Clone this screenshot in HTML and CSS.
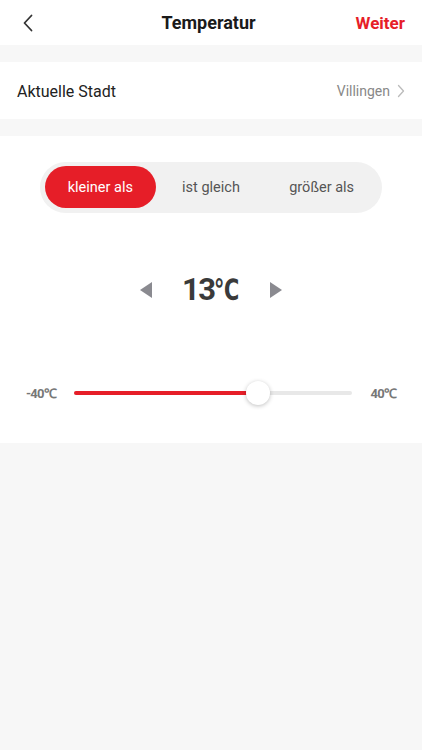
FILE: index.html
```html
<!DOCTYPE html>
<html lang="de">

<head>
    <meta charset="UTF-8">
    <meta name="viewport" content="width=device-width, initial-scale=1.0">
    <title>Temperatur</title>
    <link rel="stylesheet" href="styles.css">
</head>

<body>
    <header class="topbar">
        <button class="back" aria-label="Zurück">
            <svg width="12" height="18" viewBox="0 0 12 18">
                <path d="M9.5 1.5 L2.5 9 L9.5 16.5" fill="none" stroke="#333" stroke-width="1.8" stroke-linecap="round" stroke-linejoin="round"/>
            </svg>
        </button>
        <h1 class="title">Temperatur</h1>
        <a class="next" href="#">Weiter</a>
    </header>

    <section class="row">
        <span class="row-label">Aktuelle Stadt</span>
        <span class="row-value">
            Villingen
            <svg width="8" height="14" viewBox="0 0 8 14">
                <path d="M1.5 1.5 L6.5 7 L1.5 12.5" fill="none" stroke="#bbb" stroke-width="1.3" stroke-linecap="round" stroke-linejoin="round"/>
            </svg>
        </span>
    </section>

    <section class="panel">
        <div class="segments">
            <button class="segment active">kleiner als</button>
            <button class="segment">ist gleich</button>
            <button class="segment">größer als</button>
        </div>

        <div class="stepper">
            <span class="arrow left"></span>
            <span class="value">13<span class="unit">℃</span></span>
            <span class="arrow right"></span>
        </div>

        <div class="slider">
            <span class="limit">-40℃</span>
            <div class="track">
                <div class="fill" style="width: 66%"></div>
                <div class="thumb" style="left: 66%"></div>
            </div>
            <span class="limit">40℃</span>
        </div>
    </section>
</body>

</html>
```

FILE: styles.css
```css
:root {
    --bg: #f7f7f7;
    --red: #e61e28;
    --text: #222;
    --muted: #888;
}

body {
    margin: 0;
    height: 100vh;
    background: var(--bg);
    font-family: Roboto, "Liberation Sans", Arial, sans-serif;
    color: var(--text);
}

.topbar {
    height: 45px;
    background: #fff;
    display: grid;
    grid-template-columns: 80px 1fr 80px;
    align-items: center;
    padding: 0 17px 0 18px;
}

.back {
    background: none;
    border: none;
    padding: 0;
    width: 20px;
    display: flex;
    align-items: center;
    justify-content: center;
    margin-top: 1px;
}

.title {
    margin: 0 0 0 -6px;
    text-align: center;
    font-size: 18px;
    font-weight: bold;
    color: #1a1a1a;
}

.next {
    justify-self: end;
    color: var(--red);
    font-size: 17px;
    font-weight: bold;
    text-decoration: none;
}

.row {
    margin-top: 17px;
    height: 57px;
    background: #fff;
    display: flex;
    align-items: center;
    justify-content: space-between;
    padding: 0 17px;
}

.row-label {
    font-size: 16px;
    margin-top: 1px;
}

.row-value {
    display: flex;
    align-items: center;
    gap: 7px;
    font-size: 14px;
    color: var(--muted);
}

.panel {
    margin-top: 17px;
    height: 307px;
    background: #fff;
    padding-top: 26px;
    box-sizing: border-box;
}

.segments {
    width: 342px;
    height: 51px;
    margin: 0 auto;
    box-sizing: border-box;
    padding: 4px 5px 5px;
    background: #f1f1f1;
    border-radius: 26px;
    display: grid;
    grid-template-columns: repeat(3, 1fr);
}

.segment {
    border: none;
    background: none;
    border-radius: 21px;
    font-family: inherit;
    font-size: 14.5px;
    color: #555;
    padding: 0;
}

.segment.active {
    background: var(--red);
    color: #fff;
}

.stepper {
    margin-top: 58px;
    display: flex;
    align-items: center;
    justify-content: center;
    gap: 30px;
}

.value {
    font-size: 31px;
    font-weight: bold;
    color: #3a3a3a;
    letter-spacing: -1.5px;
}

.unit {
    display: inline-block;
    font-family: "DejaVu Sans Condensed", "DejaVu Sans", sans-serif;
    font-size: 29px;
    letter-spacing: 0;
    transform: scaleX(0.8);
    transform-origin: left center;
    margin-right: -6px;
}

.arrow {
    width: 0;
    height: 0;
    border-top: 8px solid transparent;
    border-bottom: 8px solid transparent;
}

.arrow.left {
    border-right: 12px solid #8a8a90;
}

.arrow.right {
    border-left: 12px solid #8a8a90;
}

.slider {
    margin-top: 76px;
    display: flex;
    align-items: center;
    padding: 0 26px;
    gap: 18px;
}

.limit {
    font-size: 13px;
    font-weight: bold;
    color: #777;
    letter-spacing: -0.8px;
}

.track {
    flex: 1;
    height: 4px;
    border-radius: 2px;
    background: #e8e8e8;
    position: relative;
}

.fill {
    height: 100%;
    border-radius: 2px;
    background: var(--red);
}

.thumb {
    position: absolute;
    top: 50%;
    width: 24px;
    height: 24px;
    border-radius: 50%;
    background: #fff;
    transform: translate(-50%, -50%);
    box-shadow: 0 1px 4px rgba(0, 0, 0, 0.25);
}
```
